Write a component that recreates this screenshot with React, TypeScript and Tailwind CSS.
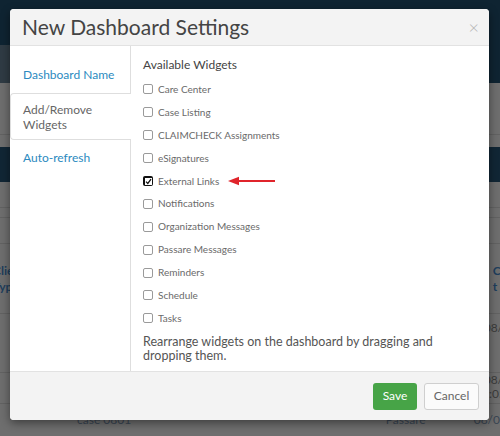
import React from "react";

const widgets = [
  { label: "Care Center", checked: false },
  { label: "Case Listing", checked: false },
  { label: "CLAIMCHECK Assignments", checked: false },
  { label: "eSignatures", checked: false },
  { label: "External Links", checked: true },
  { label: "Notifications", checked: false },
  { label: "Organization Messages", checked: false },
  { label: "Passare Messages", checked: false },
  { label: "Reminders", checked: false },
  { label: "Schedule", checked: false },
  { label: "Tasks", checked: false },
];

function Box({ checked }: { checked: boolean }) {
  if (checked) {
    return (
      <span className="flex h-[10px] w-[10px] items-center justify-center rounded-[2px] bg-[#111]">
        <span className="flex h-[7px] w-[7px] items-center justify-center bg-white">
          <svg width="7" height="7" viewBox="0 0 7 7">
            <path d="M1 3.6 L2.8 5.4 L6 1.2" stroke="#111" strokeWidth="1.3" fill="none" />
          </svg>
        </span>
      </span>
    );
  }
  return <span className="h-[10px] w-[10px] rounded-[2px] border border-[#9a9a9a] bg-white" />;
}

export default function App() {
  return (
    <div
      className="relative h-[436px] w-[500px] overflow-hidden bg-[#6e6e6e]"
      style={{ fontFamily: "Lato, 'Open Sans', sans-serif" }}
    >
      {/* background page (dimmed) */}
      <div className="flex flex-col">
        <div className="h-[45px] bg-[#0f2432]" />
        <div className="flex h-[38px]">
          <div className="w-[60px] bg-[#2f3b44]" />
          <div className="flex-1 bg-[#0f2432]" />
        </div>
        <div className="h-[52px] border-b border-[#626262]" />
        <div className="h-[12px]" />
        <div className="h-[35px] bg-[#112635]" />
        <div className="h-[26px] border-b border-[#626262]" />
        <div className="h-[10px] border-b border-[#626262]" />
        <div className="h-[26px] border-b border-[#626262]" />
        <div className="flex h-[70px] items-center justify-between border-b border-[#626262] text-[12px] leading-[16px] text-[#1e3e5c]">
          <span className="ml-[-7px] font-bold">Clie<br />Typ</span>
          <span className="mr-[-12px] font-bold">Cas<br />t&nbsp;&nbsp;</span>
        </div>
        <div className="flex h-[59px] items-start justify-end border-b border-[#626262] pt-[5px] text-[12px] text-[#3c3c3c]">
          <span className="mr-[-10px]">08/0</span>
        </div>
        <div className="flex h-[31px] flex-col items-end border-b border-[#626262] text-[12px] leading-[14px] text-[#3c3c3c]">
          <span className="mr-[-10px]">08/0</span>
          <span className="mr-[-6px]">:05</span>
        </div>
        <div className="flex h-[25px] items-start pt-[9px] text-[12px] leading-[14px] text-[#3a4654]">
          <span className="ml-[77px] w-[60px] whitespace-nowrap">case 0801</span>
          <span className="ml-[252px] w-[60px]">Passare</span>
          <span className="ml-[31px]">08/0</span>
        </div>
      </div>

      {/* modal */}
      <div className="absolute left-[10px] top-[9px] flex h-[411px] w-[479px] flex-col overflow-hidden rounded-[4px] bg-white shadow-[0_3px_10px_rgba(0,0,0,0.45)]">
        <div className="flex h-[37px] items-center justify-between border-b border-[#e2e2e2] bg-[#f3f3f3] pl-[12px] pr-[10px]">
          <span className="text-[21px] leading-[24px] text-[#444]">New Dashboard Settings</span>
          <span className="text-[18px] font-light leading-[18px] text-[#b4b4b4]">×</span>
        </div>
        <div className="flex flex-1">
          <div className="flex w-[121px] flex-col border-r border-[#dedede] pt-[11px] text-[12px]">
            <div className="py-[10px] pl-[13px] leading-[16px] text-[#2b8ac0]">Dashboard Name</div>
            <div className="mr-[-1px] rounded-l-[4px] border border-r-0 border-[#dedede] bg-white py-[7.5px] pl-[12px] leading-[15px] text-[#666]">
              Add/Remove<br />Widgets
            </div>
            <div className="py-[10px] pl-[13px] leading-[16px] text-[#2b8ac0]">Auto-refresh</div>
          </div>
          <div className="flex flex-1 flex-col pl-[12px] pr-[24px] pt-[11px]">
            <div className="text-[12px] leading-[16px] text-[#444]">Available Widgets</div>
            <div className="mt-[5px] flex flex-col">
              {widgets.map((w) => (
                <div key={w.label} className="flex h-[22.9px] items-center gap-[5px]">
                  <Box checked={w.checked} />
                  <span className="text-[10px] text-[#6a6a6a]">{w.label}</span>
                  {w.checked && (
                    <svg width="48" height="10" viewBox="0 0 48 10" className="ml-[4px]">
                      <path d="M10 5 L47 5" stroke="#e0242b" strokeWidth="2" />
                      <path d="M0 5 L11 0.8 L11 9.2 Z" fill="#e0242b" />
                    </svg>
                  )}
                </div>
              ))}
            </div>
            <div className="mt-[5px] text-[12.5px] leading-[14.5px] text-[#555]">
              Rearrange widgets on the dashboard by dragging and dropping them.
            </div>
          </div>
        </div>
        <div className="flex h-[49px] items-center justify-end gap-[7px] border-t border-[#e2e2e2] bg-[#f3f3f3] pr-[10px]">
          <button className="h-[27px] w-[44px] rounded-[3px] bg-[#47a447] text-[12px] text-white">Save</button>
          <button className="h-[27px] w-[55px] rounded-[3px] border border-[#cfcfcf] bg-[#fbfbfb] text-[12px] text-[#666]">Cancel</button>
        </div>
      </div>
    </div>
  );
}
